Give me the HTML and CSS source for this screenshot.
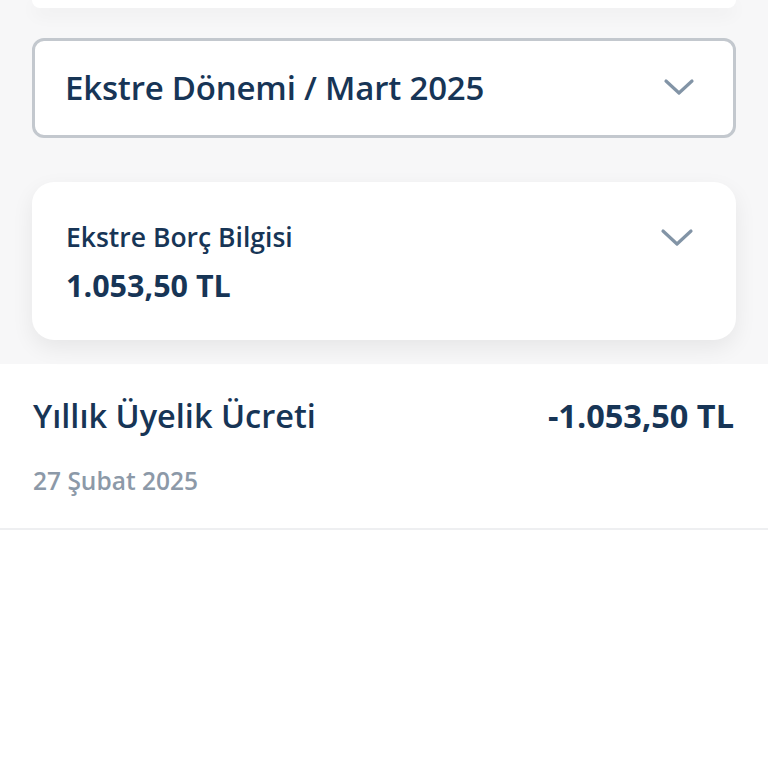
FILE: index.html
```html
<!DOCTYPE html>
<html>
<head>
	<title>Ekstre</title>
	<meta name="viewport" content="width=device-width,initial-scale=1.0" />
	<link rel="stylesheet" href="styles.css">
</head>
<body>
	<div class="top">
		<div class="top-card"></div>

		<div class="select">
			<span class="select-text">Ekstre Dönemi / Mart 2025</span>
			<svg class="chev" width="32" height="20" viewBox="0 0 32 20">
				<path d="M3 3 L16 15 L29 3" fill="none" stroke="#8294a6" stroke-width="3.2" stroke-linecap="round" stroke-linejoin="round" />
			</svg>
		</div>

		<div class="card">
			<div class="card-info">
				<div class="card-label">Ekstre Borç Bilgisi</div>
				<div class="card-amount">1.053,50 TL</div>
			</div>
			<svg class="chev chev-card" width="34" height="20" viewBox="0 0 34 20">
				<path d="M3 3 L17 16 L31 3" fill="none" stroke="#8294a6" stroke-width="3.2" stroke-linecap="round" stroke-linejoin="round" />
			</svg>
		</div>
	</div>

	<div class="item">
		<div class="item-row">
			<span class="item-title">Yıllık Üyelik Ücreti</span>
			<span class="item-amount">-1.053,50 TL</span>
		</div>
		<div class="item-date">27 Şubat 2025</div>
	</div>
</body>
</html>
```

FILE: styles.css
```css
body {
	margin: 0;
	padding: 0;
	background-color: #ffffff;
	font-family: "Open Sans", "Noto Sans", sans-serif;
	color: #173556;
}
.top {
	background-color: #f7f7f8;
	padding: 0 32px 24px 32px;
}
.top-card {
	height: 8px;
	background-color: #ffffff;
	border-radius: 0 0 16px 16px;
	box-shadow: 0 6px 18px rgba(0, 0, 0, 0.06);
}
.select {
	margin-top: 30px;
	height: 94px;
	background-color: #ffffff;
	border: 3px solid #c3c8ce;
	border-radius: 12px;
	display: flex;
	align-items: center;
	justify-content: space-between;
	padding: 0 38px 0 30px;
}
.select-text {
	font-size: 33px;
	font-weight: 600;
	letter-spacing: -0.2px;
	margin-top: -2px;
}
.chev {
	display: block;
}
.card {
	margin-top: 44px;
	height: 158px;
	box-sizing: border-box;
	background-color: #ffffff;
	border-radius: 22px;
	box-shadow: 0 8px 22px rgba(0, 0, 0, 0.07);
	display: flex;
	justify-content: space-between;
	align-items: flex-start;
	padding: 38px 42px 0 34px;
}
.card-label {
	font-size: 26.5px;
	font-weight: 600;
	line-height: 34px;
}
.card-amount {
	font-size: 30.5px;
	font-weight: 700;
	line-height: 40px;
	margin-top: 11px;
}
.chev-card {
	margin-top: 8px;
}
.item {
	padding: 30px 34px 32px 33px;
	border-bottom: 2px solid #eeeff1;
	box-shadow: 0 2px 3px rgba(0, 0, 0, 0.03);
}
.item-row {
	display: flex;
	justify-content: space-between;
	align-items: center;
}
.item-title {
	font-size: 32.5px;
	font-weight: 600;
	line-height: 44px;
}
.item-amount {
	font-size: 32.5px;
	font-weight: 700;
	line-height: 44px;
}
.item-date {
	margin-top: 28px;
	font-size: 24.5px;
	font-weight: 600;
	color: #8c99a8;
	line-height: 30px;
}
```
